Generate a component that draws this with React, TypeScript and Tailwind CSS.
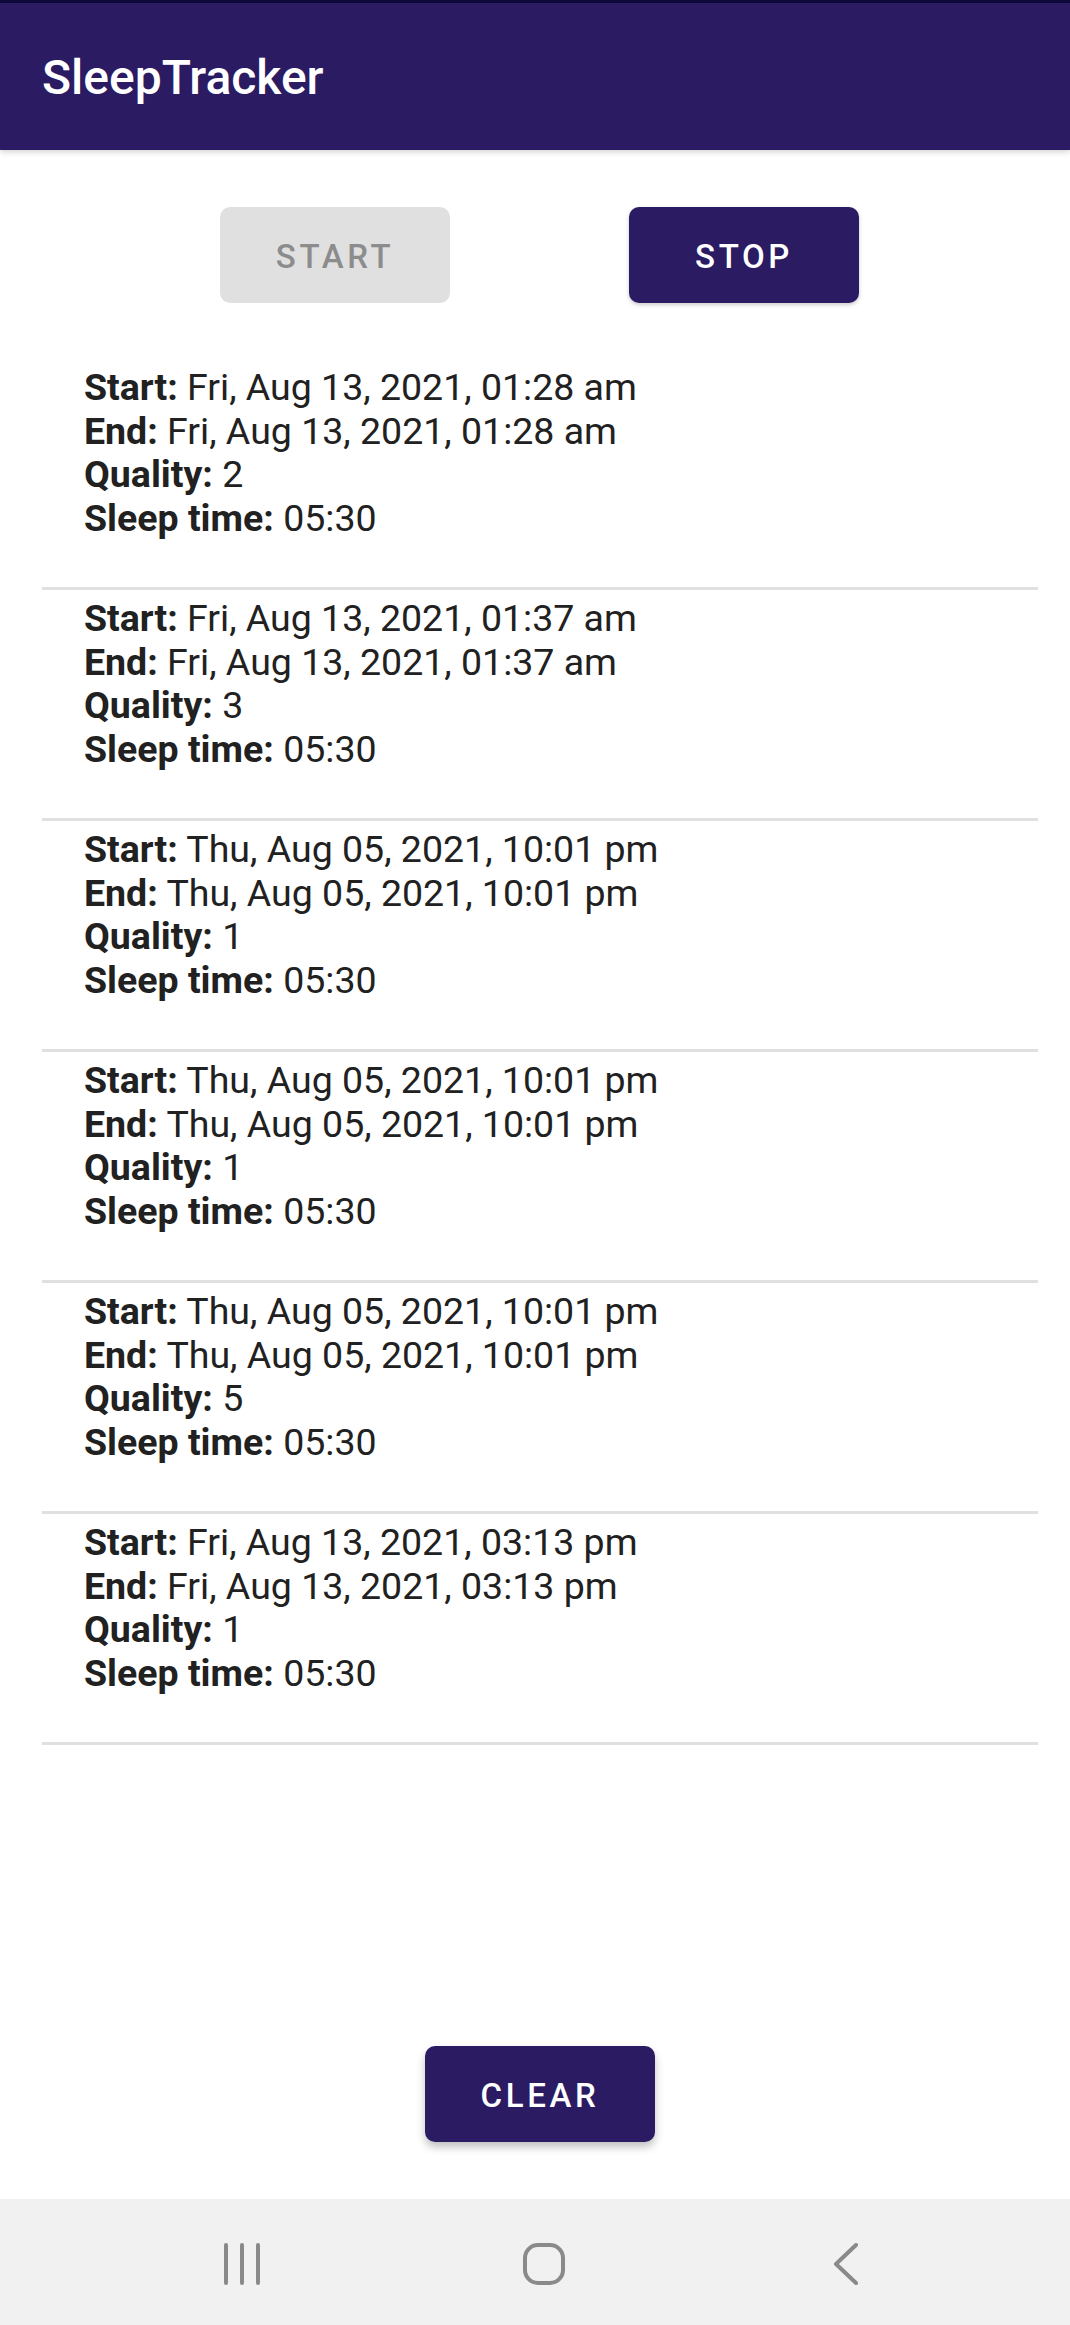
import React from 'react';

interface SleepNight {
  start: string;
  end: string;
  quality: number;
  sleepTime: string;
}

const nights: SleepNight[] = [
  { start: 'Fri, Aug 13, 2021, 01:28 am', end: 'Fri, Aug 13, 2021, 01:28 am', quality: 2, sleepTime: '05:30' },
  { start: 'Fri, Aug 13, 2021, 01:37 am', end: 'Fri, Aug 13, 2021, 01:37 am', quality: 3, sleepTime: '05:30' },
  { start: 'Thu, Aug 05, 2021, 10:01 pm', end: 'Thu, Aug 05, 2021, 10:01 pm', quality: 1, sleepTime: '05:30' },
  { start: 'Thu, Aug 05, 2021, 10:01 pm', end: 'Thu, Aug 05, 2021, 10:01 pm', quality: 1, sleepTime: '05:30' },
  { start: 'Thu, Aug 05, 2021, 10:01 pm', end: 'Thu, Aug 05, 2021, 10:01 pm', quality: 5, sleepTime: '05:30' },
  { start: 'Fri, Aug 13, 2021, 03:13 pm', end: 'Fri, Aug 13, 2021, 03:13 pm', quality: 1, sleepTime: '05:30' },
];

const Line: React.FC<{ label: string; value: string | number }> = ({ label, value }) => (
  <div className="h-[43.5px] leading-[43.5px] whitespace-nowrap">
    <span className="font-bold">{label}</span> {value}
  </div>
);

const NavBar: React.FC = () => (
  <div className="h-[126px] bg-[#f1f1f1] flex items-center pl-[222px] pt-[4px]">
    {/* recents */}
    <svg width="40" height="42" viewBox="0 0 40 42" fill="none" stroke="#8a8a8a" strokeWidth="4" strokeLinecap="round">
      <line x1="4" y1="2" x2="4" y2="40" />
      <line x1="20" y1="2" x2="20" y2="40" />
      <line x1="36" y1="2" x2="36" y2="40" />
    </svg>
    {/* home */}
    <svg className="ml-[259px]" width="46" height="46" viewBox="0 0 46 46" fill="none" stroke="#8a8a8a" strokeWidth="4">
      <rect x="4" y="4" width="38" height="38" rx="13" />
    </svg>
    {/* back */}
    <svg className="ml-[265px]" width="28" height="42" viewBox="0 0 28 42" fill="none" stroke="#8a8a8a" strokeWidth="4" strokeLinecap="round" strokeLinejoin="round">
      <polyline points="24,2 4,21 24,40" />
    </svg>
  </div>
);

export default function App() {
  return (
    <div className="w-[1070px] h-[2325px] flex flex-col bg-white font-[Roboto,sans-serif] text-[#212121]">
      <header className="h-[150px] shrink-0 bg-[#2a1b63] border-t-[3px] border-[#0c0838] flex items-center px-[42px] shadow-[0_2px_6px_rgba(0,0,0,0.18)] relative z-10">
        <h1 className="text-white text-[48px] font-medium pt-[2px]">SleepTracker</h1>
      </header>

      <main className="flex-1 flex flex-col">
        <div className="mt-[57px] flex pl-[220px] gap-[179px]">
          <button className="w-[230px] h-[96px] pt-[4px] rounded-[10px] bg-[#e0e0e0] text-[#8c8c8c] text-[33px] font-medium tracking-[0.11em] uppercase">
            Start
          </button>
          <button className="w-[230px] h-[96px] pt-[4px] rounded-[10px] bg-[#2a1b63] text-white text-[33px] font-medium tracking-[0.11em] uppercase shadow-[0_2px_4px_rgba(0,0,0,0.2)]">
            Stop
          </button>
        </div>

        <ul className="mt-[56px] ml-[42px] w-[996px]">
          {nights.map((night, index) => (
            <li key={index} className="pt-[7px] pb-[47px] pl-[42px] border-b-[3px] border-[#e0e0e0] text-[37.5px]">
              <Line label="Start:" value={night.start} />
              <Line label="End:" value={night.end} />
              <Line label="Quality:" value={night.quality} />
              <Line label="Sleep time:" value={night.sleepTime} />
            </li>
          ))}
        </ul>

        <div className="mt-auto mb-[57px] pl-[425px]">
          <button className="w-[230px] h-[96px] pt-[4px] rounded-[10px] bg-[#2a1b63] text-white text-[33px] font-medium tracking-[0.11em] uppercase shadow-[0_5px_8px_rgba(0,0,0,0.25)]">
            Clear
          </button>
        </div>
      </main>

      <NavBar />
    </div>
  );
}
